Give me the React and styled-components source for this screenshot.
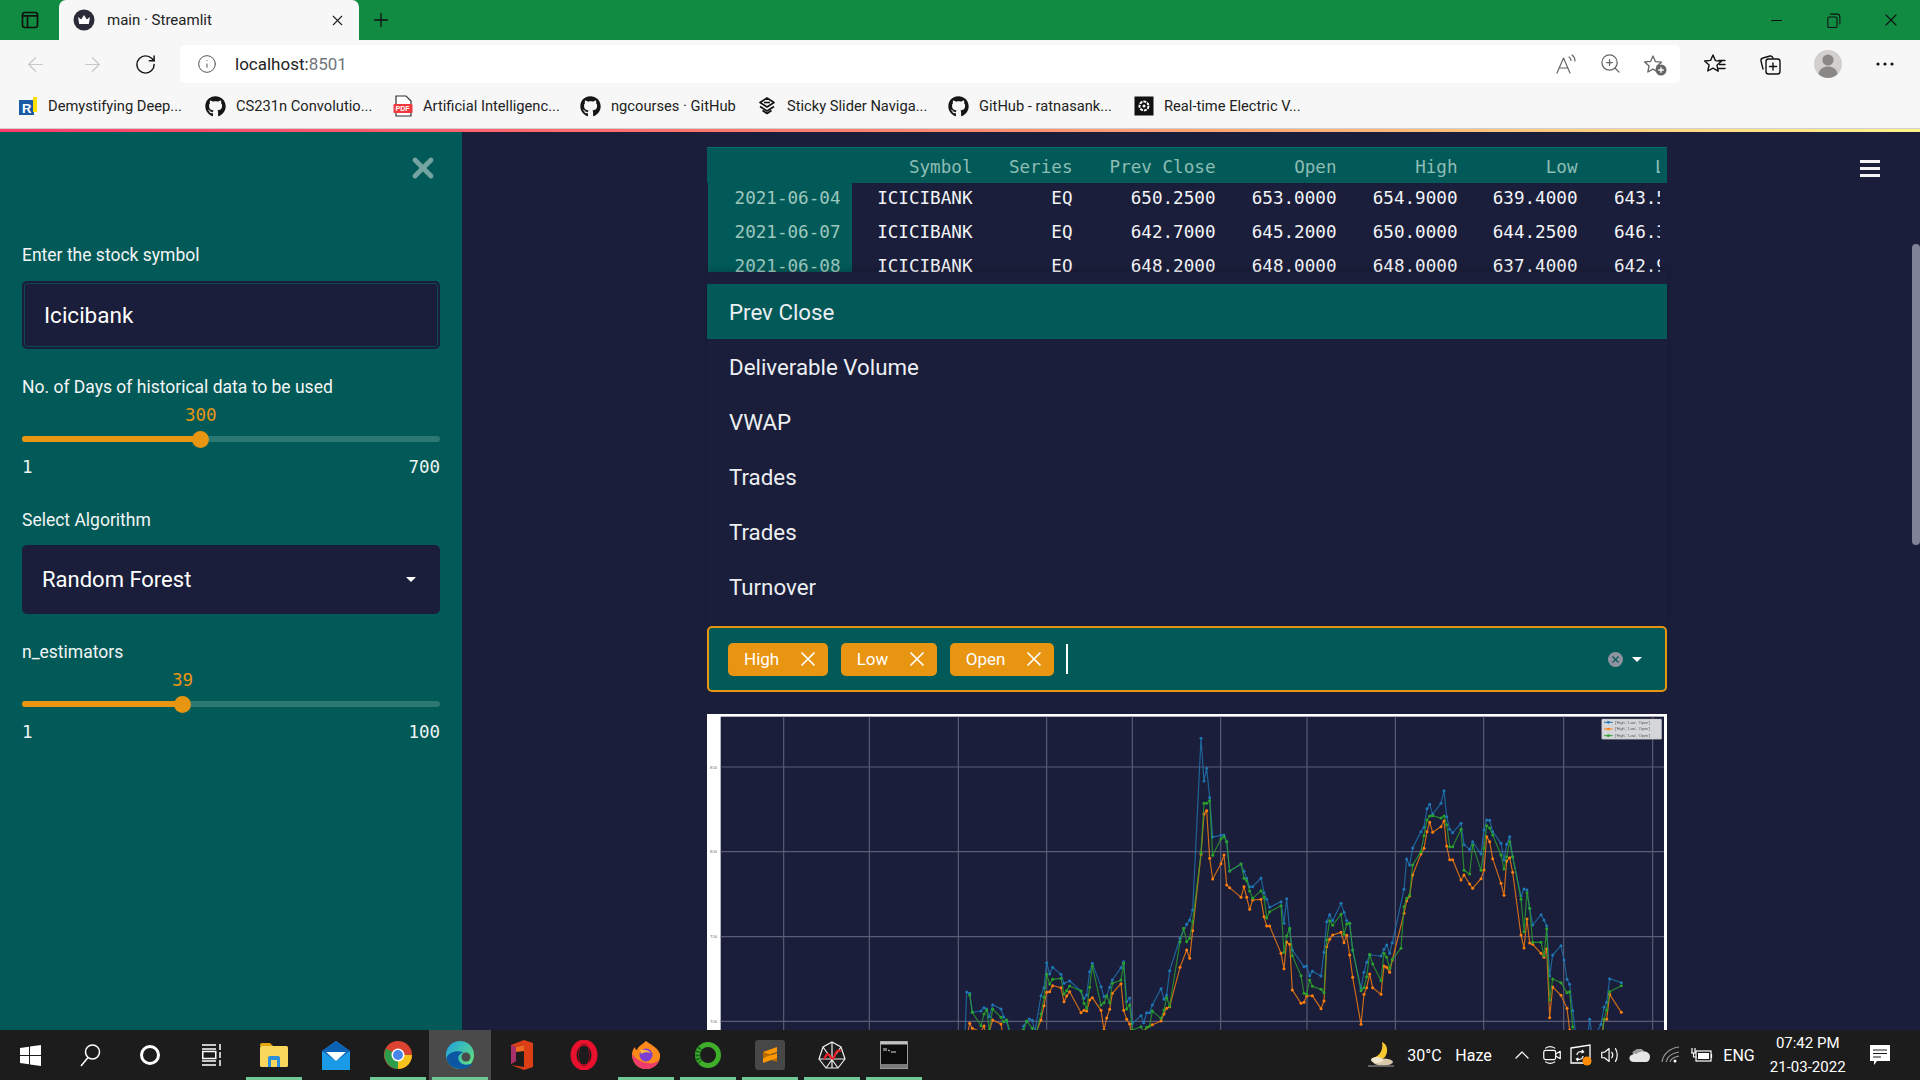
import React from 'react';
import styled, { createGlobalStyle } from 'styled-components';
import { ArrowLeft, ArrowRight, RotateCw, Info, ZoomIn, ChevronUp, X, Plus, Minus } from 'lucide-react';
import { FaGithub } from 'react-icons/fa';

const TEAL = '#025a58';
const NAVY = '#1a1e3a';
const ORANGE = '#e89512';
const UI = '"Roboto", "Liberation Sans", sans-serif';
const APP = '"Roboto", "Noto Sans", sans-serif';
const MONO = '"DejaVu Sans Mono", "Liberation Mono", monospace';

const Global = createGlobalStyle`
  html, body { margin: 0; padding: 0; height: 100%; overflow: hidden; background: ${NAVY}; }
  * { box-sizing: border-box; }
`;

const Screen = styled.div`
  width: 1920px;
  height: 1080px;
  display: flex;
  flex-direction: column;
  overflow: hidden;
  font-family: ${UI};
`;

/* browser chrome */
const TitleBar = styled.div`
  height: 40px;
  flex: none;
  background: #118a42;
  display: flex;
  align-items: center;
`;
const Slot = styled.div`
  width: ${(p) => p.$w}px;
  flex: none;
  display: flex;
  align-items: center;
  justify-content: center;
  color: ${(p) => p.$color || '#111'};
`;
const Tab = styled.div`
  width: 300px;
  height: 40px;
  flex: none;
  background: #f7f7f7;
  border-radius: 7px 7px 0 0;
  display: flex;
  align-items: center;
  padding: 0 13px 0 14px;
  font-size: 15px;
  color: #222;
`;
const TabTitle = styled.span`
  margin-left: 12px;
  flex: 1;
`;
const Grow = styled.div`
  flex: 1;
`;
const Toolbar = styled.div`
  height: 48px;
  flex: none;
  background: #f7f7f7;
  display: flex;
  align-items: center;
  padding-right: 16px;
`;
const Address = styled.div`
  flex: 1;
  height: 38px;
  margin-left: 4px;
  background: #fff;
  border-radius: 5px;
  display: flex;
  align-items: center;
  padding: 0 13px 0 17px;
  gap: 18px;
  font-size: 17px;
  color: #222;
`;
const Port = styled.span`
  color: #70757a;
`;
const AddressIcons = styled.div`
  margin-left: auto;
  display: flex;
  gap: 21px;
  color: #666;
`;
const Bookmarks = styled.div`
  height: 40px;
  flex: none;
  background: #f7f7f7;
  display: flex;
  align-items: center;
  padding: 0 0 4px 18px;
  font-size: 14.7px;
  color: #222;
`;
const Bookmark = styled.div`
  width: ${(p) => p.$w}px;
  flex: none;
  display: flex;
  align-items: center;
  gap: 10px;
  white-space: nowrap;
  overflow: hidden;
`;
const Decoration = styled.div`
  height: 4px;
  flex: none;
  border-top: 1px solid #d0d0d0;
  background: linear-gradient(90deg, #ff3e6c, #ff8a70 50%, #fff38a);
`;

/* streamlit app */
const AppArea = styled.div`
  flex: 1;
  min-height: 0;
  display: flex;
  position: relative;
  background: ${NAVY};
  overflow: hidden;
`;
const Sidebar = styled.aside`
  width: 462px;
  flex: none;
  background: ${TEAL};
  padding: 0 22px;
  color: #f4f6f6;
  font-family: ${APP};
`;
const CloseRow = styled.div`
  height: 111px;
  padding: 20px 1px 0 0;
  display: flex;
  justify-content: flex-end;
  align-items: flex-start;
`;
const Field = styled.div`
  margin-bottom: ${(p) => p.$after}px;
`;
const Label = styled.div`
  height: 24px;
  line-height: 24px;
  font-size: 17.5px;
  color: #f2f5f5;
`;
const TextBox = styled.div`
  margin-top: 14px;
  height: 68px;
  background: ${NAVY};
  border-radius: 5px;
  border: 2px solid ${NAVY};
  box-shadow: inset 0 0 0 1px #0d4a50;
  display: flex;
  align-items: center;
  padding-left: 20px;
  font-size: 22.5px;
  color: #fff;
`;
const SelectBox = styled.div`
  margin-top: 13px;
  height: 69px;
  background: ${NAVY};
  border-radius: 5px;
  display: flex;
  align-items: center;
  justify-content: space-between;
  padding: 0 24px 0 20px;
  font-size: 22px;
  color: #fff;
`;
const Caret = styled.div`
  width: 0;
  height: 0;
  border-left: 5.5px solid transparent;
  border-right: 5.5px solid transparent;
  border-top: 5.5px solid #fff;
`;
const SliderBox = styled.div`
  position: relative;
  height: 80px;
  padding-top: 37px;
  font-family: ${MONO};
  font-size: 17.5px;
`;
const SliderValue = styled.div`
  position: absolute;
  top: 5px;
  transform: translateX(-50%);
  line-height: 22px;
  color: ${ORANGE};
`;
const Track = styled.div`
  position: relative;
  height: 6px;
  border-radius: 3px;
  background: #2c7873;
`;
const TrackFill = styled.div`
  height: 100%;
  border-radius: 3px;
  background: ${ORANGE};
`;
const Thumb = styled.div`
  position: absolute;
  top: -5.5px;
  width: 17px;
  height: 17px;
  margin-left: -8.5px;
  border-radius: 50%;
  background: ${ORANGE};
`;
const Scale = styled.div`
  margin-top: 14px;
  display: flex;
  justify-content: space-between;
  line-height: 22px;
  color: #eef3f3;
`;
const Content = styled.main`
  flex: 1;
  min-width: 0;
  display: flex;
  justify-content: center;
  padding-top: 15px;
`;
const Column = styled.div`
  width: 960px;
  flex: none;
  font-family: ${APP};
`;
const TableFrame = styled.div`
  height: 126px;
  overflow: hidden;
  background: ${NAVY};
  border-top: 1px solid #0b6c6c;
  font-family: ${MONO};
  font-size: 17.6px;
`;
const TableRow = styled.div`
  display: grid;
  grid-template-columns: 145px 132px 100px 143px 121px 121px 120px 71px 1fr;
  height: ${(p) => (p.$head ? 35 : 34)}px;
  line-height: ${(p) => (p.$head ? 39 : 31)}px;
  background: ${(p) => (p.$head ? TEAL : 'transparent')};
  color: ${(p) => (p.$head ? '#8dbdb5' : '#f3f4f7')};
`;
const Cell = styled.div`
  text-align: right;
  padding-right: 11.5px;
  white-space: nowrap;
`;
const IndexCell = styled(Cell)`
  margin-left: 1px;
  background: ${TEAL};
  color: #9cc7be;
`;
const ClipCell = styled.div`
  overflow: hidden;
  white-space: nowrap;
  padding-left: ${(p) => p.$pad}px;
`;
const SelectWrap = styled.div`
  position: relative;
  margin-top: 353px;
`;
const OptionMenu = styled.div`
  position: absolute;
  left: 0;
  right: 0;
  bottom: 100%;
  height: 353px;
  padding: 12px 0 10px;
  background: ${NAVY};
  box-shadow: 0 -2px 6px rgba(0, 0, 0, 0.18);
  margin-bottom: 1px;
`;
const MenuItem = styled.div`
  height: 55px;
  line-height: 57px;
  padding-left: 22px;
  font-size: 22.3px;
  color: #eceef2;
  background: ${(p) => (p.$active ? TEAL : 'transparent')};
`;
const MultiSelect = styled.div`
  height: 66px;
  background: ${TEAL};
  border: 2px solid ${ORANGE};
  border-radius: 5px;
  display: flex;
  align-items: center;
  padding: 0 23px 0 19px;
  color: #fff;
`;
const Tag = styled.div`
  height: 33px;
  display: flex;
  align-items: center;
  gap: 16.5px;
  margin-right: 13px;
  padding: 0 8px 0 16px;
  background: ${ORANGE};
  border-radius: 5px;
  font-size: 17px;
`;
const Cursor = styled.div`
  width: 2px;
  height: 30px;
  background: #fff;
  margin-left: -1px;
`;
const ClearDot = styled.div`
  margin-left: auto;
  width: 15px;
  height: 15px;
  border-radius: 50%;
  background: #8f939f;
  color: ${TEAL};
  display: flex;
  align-items: center;
  justify-content: center;
`;
const SelectCaret = styled(Caret)`
  margin-left: 9px;
`;
const ChartFrame = styled.div`
  margin-top: 22px;
  height: 330px;
  background: #fff;
`;
const ChartSvg = styled.svg`
  display: block;
  width: 960px;
  height: 316px;
  filter: blur(0.45px);
`;
const ScrollGutter = styled.div`
  width: 8px;
  flex: none;
  padding-top: 112px;
`;
const ScrollThumb = styled.div`
  height: 301px;
  border-radius: 4px;
  background: #808396;
`;
const Hamburger = styled.div`
  position: absolute;
  top: 28px;
  right: 40px;
  width: 20px;
  height: 17px;
  border-top: 3px solid #f4f4f6;
  border-bottom: 3px solid #f4f4f6;
  &::after {
    content: '';
    display: block;
    margin-top: 4px;
    height: 3px;
    background: #f4f4f6;
  }
`;

/* taskbar */
const Taskbar = styled.footer`
  height: 50px;
  flex: none;
  background: #1c1c1c;
  display: flex;
  align-items: stretch;
  padding-right: 20px;
  color: #fff;
  font-size: 16px;
`;
const TaskSlot = styled.div`
  position: relative;
  width: ${(p) => p.$w || 62}px;
  margin-right: ${(p) => p.$mr || 0}px;
  flex: none;
  display: flex;
  align-items: center;
  justify-content: center;
  background: ${(p) => (p.$active ? '#4a4a4a' : 'transparent')};
  ${(p) =>
    p.$open &&
    `&::after {
      content: '';
      position: absolute;
      left: 3px;
      right: 3px;
      bottom: 0;
      height: 3px;
      background: #70c897;
    }`}
`;
const Clock = styled.div`
  width: 98px;
  padding-right: 4.6px;
  flex: none;
  display: flex;
  flex-direction: column;
  align-items: center;
  justify-content: center;
  gap: 5px;
  font-size: 15px;
  line-height: 19px;
`;

const StrokeIcon = ({ size = 22, sw = 1.4, color = 'currentColor', children }) => (
  <svg width={size} height={size} viewBox="0 0 24 24" fill="none" stroke={color} strokeWidth={sw} strokeLinecap="round" strokeLinejoin="round">
    {children}
  </svg>
);

const STAR = 'M10 3l2.4 5.6 6 .6-4.5 4 1.3 6-5.2-3.1L4.8 19l1.3-6-4.5-4 6-.6z';

const PanelIcon = () => (
  <StrokeIcon size={20} sw={2}>
    <rect x="3" y="3" width="18" height="18" rx="3" />
    <path d="M3 7h18M9 7v14" />
  </StrokeIcon>
);
const Crown = () => (
  <svg width="22" height="22" viewBox="0 0 22 22">
    <circle cx="11" cy="11" r="10.5" fill="#2b2c3a" />
    <path d="M5 8l3.2 2.4L11 6l2.8 4.4L17 8l-1.2 7H6.2z" fill="#fff" />
  </svg>
);
const ReadAloud = () => (
  <StrokeIcon size={24} sw={1.2}>
    <path d="M3 21L9.5 6 16 21M5.3 16h8.4M15 5c1.5 1 2 2.5 2 3.5M18 3c2 1.4 3 3.6 3 6" />
  </StrokeIcon>
);
const StarAdd = () => (
  <svg width="24" height="24" viewBox="0 0 24 24" fill="none">
    <path d={STAR} stroke="#666" strokeWidth="1.3" strokeLinejoin="round" transform="translate(0 1)" />
    <circle cx="18" cy="18" r="5.5" fill="#666" />
    <path d="M18 15.2v5.6M15.2 18h5.6" stroke="#fff" strokeWidth="1.4" />
  </svg>
);
const Favorites = () => (
  <StrokeIcon size={24} sw={1.4} color="#111">
    <path d={STAR} />
    <path d="M16 8.5h6M16.5 12.5h5.5M15 16.5h7" />
  </StrokeIcon>
);
const Collections = () => (
  <StrokeIcon size={24} sw={1.4} color="#111">
    <rect x="8" y="7" width="14" height="15" rx="2.5" />
    <path d="M15 11v7M11.5 14.5h7M5 17l-2-8c-.3-1.5.4-2.6 2-3l7-2c1.4-.3 2.4.2 3 2" />
  </StrokeIcon>
);
const Profile = () => (
  <svg width="28" height="28" viewBox="0 0 28 28">
    <circle cx="14" cy="14" r="14" fill="#d2d0ce" />
    <circle cx="14" cy="10" r="5.6" fill="#8a8886" />
    <path d="M4.5 24c1-5.5 5-7.5 9.5-7.5s8.5 2 9.500 7.500c-2.500 2.500-6 4-9.500 4s-7-1.500-9.500-4z" fill="#8a8886" />
  </svg>
);
const Dots = () => (
  <svg width="20" height="6" viewBox="0 0 20 6">
    <circle cx="3" cy="3" r="1.6" fill="#111" />
    <circle cx="10" cy="3" r="1.6" fill="#111" />
    <circle cx="17" cy="3" r="1.6" fill="#111" />
  </svg>
);
const Restore = () => (
  <StrokeIcon size={17} sw={1.5} color="#111">
    <rect x="4" y="7" width="13" height="15" rx="2" />
    <path d="M8 3h9c2.5 0 4 1.500 4 4v10" />
  </StrokeIcon>
);

const ResearchIcon = () => (
  <svg width="20" height="20" viewBox="0 0 20 20">
    <rect x="1" y="4" width="15" height="15" fill="#1b5ba6" />
    <rect x="15" y="1" width="4" height="15" fill="#ffe100" />
    <text x="4" y="16.5" fontSize="13" fontWeight="700" fontFamily="Liberation Sans" fill="#fff">R</text>
  </svg>
);
const PdfIcon = () => (
  <svg width="20" height="22" viewBox="0 0 20 22">
    <path d="M3 1h10l5 5v15H3z" fill="#fff" stroke="#333" strokeWidth="1.2" />
    <rect x="0.5" y="9" width="19" height="9" rx="1" fill="#f0393e" />
    <text x="2.5" y="16" fontSize="7" fontWeight="700" fontFamily="Liberation Sans" fill="#fff">PDF</text>
  </svg>
);
const StickyIcon = () => (
  <svg width="20" height="20" viewBox="0 0 20 20" fill="none" stroke="#111" strokeWidth="1.6" strokeLinejoin="round">
    <path d="M10 2l7 4.500-7 4.500-7-4.500z" />
    <path d="M7 6.500h6" />
    <path d="M3 10.500l7 4.500 7-4.500M5.500 14.500l4.500 3 4.500-3" />
  </svg>
);
const GearTile = () => (
  <svg width="20" height="20" viewBox="0 0 20 20">
    <rect x="0.5" y="0.5" width="19" height="19" fill="#111" />
    <circle cx="10" cy="10" r="4.5" fill="none" stroke="#fff" strokeWidth="2" strokeDasharray="3 1" />
    <circle cx="10" cy="10" r="1.5" fill="#fff" />
  </svg>
);
const Git = () => <FaGithub size={21} color="#171515" />;

const Win = () => (
  <svg width="21" height="21" viewBox="0 0 21 21" fill="#fff">
    <path d="M0 3l9-1.300v8.300H0zM10 1.500L21 0v10H10zM0 11h9v8.300L0 18zM10 11h11v10l-11-1.500z" />
  </svg>
);
const SearchGlyph = () => (
  <svg width="24" height="24" viewBox="0 0 24 24" fill="none" stroke="#fff" strokeWidth="1.5">
    <circle cx="14.5" cy="9" r="7" />
    <path d="M10 14.500L3 23" />
  </svg>
);
const Ring = () => (
  <svg width="22" height="22" viewBox="0 0 22 22" fill="none" stroke="#fff" strokeWidth="3">
    <circle cx="11" cy="11" r="8.5" />
  </svg>
);
const TaskView = () => (
  <svg width="20" height="24" viewBox="0 0 20 24" fill="none" stroke="#fff" strokeWidth="1.5">
    <path d="M0 2h14M0 6h14M0 22h14M0 18h14" />
    <rect x="0.75" y="8.5" width="13" height="7" />
    <path d="M18 1v6M18 9v6M18 17v6" />
  </svg>
);
const Explorer = () => (
  <svg width="28" height="24" viewBox="0 0 28 24">
    <path d="M0 2c0-1 .6-2 2-2h8l3 3h-13z" fill="#e5a50a" />
    <rect y="3" width="28" height="21" rx="1.5" fill="#f9d65c" />
    <path d="M8 24v-9c0-1 .5-2 2-2h8c1.500 0 2 1 2 2v9h-3v-7h-6v7z" fill="#2b8fd9" />
  </svg>
);
const Mail = () => (
  <svg width="30" height="30" viewBox="0 0 30 30">
    <path d="M1 11L15 1l14 10v19H1z" fill="#1a9be8" />
    <path d="M1 11L15 1l14 10-14 10z" fill="#0d62b5" />
    <path d="M5 12h20L15 21z" fill="#fff" />
  </svg>
);
const Chrome = () => (
  <svg width="28" height="28" viewBox="0 0 28 28">
    <circle cx="14" cy="14" r="14" fill="#d9432f" />
    <path d="M14 14L2 7.500A14 14 0 0 0 14 28z" fill="#2d9d4c" />
    <path d="M14 14h14a14 14 0 0 1-14 14z" fill="#f6c21c" />
    <circle cx="14" cy="14" r="6.5" fill="#fff" />
    <circle cx="14" cy="14" r="5" fill="#4a86e8" />
  </svg>
);
const Edge = () => (
  <svg width="30" height="30" viewBox="0 0 30 30">
    <defs>
      <linearGradient id="edgeTop" x1="0" y1="0" x2="1" y2="0.8">
        <stop offset="0" stopColor="#1c9fe6" />
        <stop offset="1" stopColor="#63e07a" />
      </linearGradient>
    </defs>
    <circle cx="15" cy="15" r="14" fill="url(#edgeTop)" />
    <path d="M1.500 18c1 7 8 11 14 11 5 0 10-2 12-6-4 2.500-10 2.500-13-1.500-2.500-3.500-1-8 4-9-7-3-15 0-17 5.500z" fill="#0b57a4" />
    <circle cx="21" cy="17" r="4.500" fill="#4a4a4a" />
  </svg>
);
const Office = () => (
  <svg width="24" height="30" viewBox="0 0 24 30">
    <path d="M1 5l13-5 9 3v24l-9 3-13-5 13 2V5L6 7v14l-5 3z" fill="#dc3e15" />
    <path d="M6 7l8-2v6l-8 1z" fill="#f06a24" />
    <path d="M1 5l5 2v14l-5 3z" fill="#a62f6c" />
  </svg>
);
const Opera = () => (
  <svg width="28" height="30" viewBox="0 0 28 30" fill="none">
    <ellipse cx="14" cy="15" rx="10.5" ry="12.5" stroke="#e8112d" strokeWidth="6" />
    <ellipse cx="14" cy="15" rx="5.5" ry="11" stroke="#8f0a1c" strokeWidth="1" />
  </svg>
);
const Firefox = () => (
  <svg width="30" height="30" viewBox="0 0 30 30">
    <path d="M15 1c3 3 11 5 14 13 1 8-5 15-14 15S1 22 1 14c0-3 2-6 3-7 0 2 1 3 2 3 1-4 5-5 9-9z" fill="#ff8a1c" />
    <path d="M1 14c0 8 6 15 14 15 6 0 11-3 13-9-3 3-8 4-12 3C9 22 5 19 1 14z" fill="#ef3a6d" />
    <circle cx="15" cy="15" r="6.5" fill="#7b3fd1" />
    <path d="M9 10c4-1 9 0 11 3-3-1-7-1-10 1z" fill="#ffbb3d" />
  </svg>
);
const GreenRing = () => (
  <svg width="28" height="28" viewBox="0 0 28 28" fill="none">
    <circle cx="14" cy="14" r="10.5" stroke="#3fae2a" strokeWidth="5" />
    <path d="M6.500 7A10.500 10.500 0 0 0 6.500 21" stroke="#1a6d1e" strokeWidth="5" strokeDasharray="2 1.500" />
  </svg>
);
const Sublime = () => (
  <svg width="30" height="30" viewBox="0 0 30 30">
    <rect width="30" height="30" rx="3" fill="#474747" />
    <path d="M8 12l14-5v5L8 17z" fill="#ff9800" />
    <path d="M8 12l14 5v5L8 17z" fill="#b86a00" />
    <path d="M8 18l14-5v5L8 23z" fill="#ff9800" />
  </svg>
);
const Web = () => (
  <svg width="30" height="30" viewBox="0 0 30 30" fill="none" stroke="#eee" strokeWidth="1.2">
    <path d="M15 2l9 5 4 12-7 9H9l-7-9 4-12zM15 2v26M2 19l26 0M6 7l15 21M24 7L9 28" />
    <path d="M7 19c2-4 4-7 6-3s4 3 5-1 3-5 6-4" stroke="#e81d25" strokeWidth="2.2" />
  </svg>
);
const Terminal = () => (
  <svg width="28" height="28" viewBox="0 0 28 28">
    <rect x="0.5" y="0.5" width="27" height="27" fill="#0c0c0c" stroke="#9a9a9a" />
    <rect x="0.5" y="0.5" width="27" height="3" fill="#c0c0c0" />
    <rect x="0.5" y="23" width="27" height="4" fill="#7a7a7a" />
    <path d="M4 7v3M6 7v3M8 9l2 1M11 11h5" stroke="#ddd" strokeWidth="1" />
  </svg>
);
const Moon = () => (
  <svg width="30" height="28" viewBox="0 0 30 28">
    <path d="M15 1c5 2 7 9 3 15-3 3-10 4-14 1 7 0 13-7 11-16z" fill="#f7c92e" />
    <ellipse cx="16" cy="21" rx="10" ry="3.5" fill="#d8c9a8" />
    <ellipse cx="10" cy="19" rx="6" ry="3" fill="#efe6d0" />
    <path d="M1 25h26" stroke="#777" strokeWidth="1.5" />
  </svg>
);
const Meet = () => (
  <StrokeIcon size={22} sw={1.3} color="#fff">
    <rect x="3" y="7" width="13" height="10" rx="2" />
    <path d="M16 11l5-3v8l-5-3M5 4.500c3-2 7-2 10 0M5 19.500c3 2 7 2 10 0" />
  </StrokeIcon>
);
const Sync = () => (
  <svg width="24" height="24" viewBox="0 0 24 24" fill="none" stroke="#fff" strokeWidth="1.3">
    <path d="M1 5l19-3v18H1z" />
    <path d="M7 12c0-3 3-4 6-3M13 13c0 3-3 4-6 3M12 7l1.500 2-2 1M8 18l-1.500-2 2-1" />
    <circle cx="17" cy="18" r="4.5" fill="#ff8c00" stroke="none" />
  </svg>
);
const Speaker = () => (
  <StrokeIcon size={22} sw={1.3} color="#fff">
    <path d="M3 9v6h3l5 4V5L6 9zM14 9c1 1.500 1 4.500 0 6M18 5c2.500 4 2.500 10 0 14" />
  </StrokeIcon>
);
const Cloud = () => (
  <svg width="22" height="16" viewBox="0 0 22 16">
    <path d="M5 15c-6 0-6-7-1-7.500C5 2 12 0 15 4.500c4 0 6 2.500 6 5.500s-2 5-4 5z" fill="#e6e6e6" />
    <path d="M3 6C5 2 12 0 15 4.500 11 4 8 6 7.500 7 6 6.500 4.500 6.500 3 6z" fill="#9a9a9a" />
  </svg>
);
const WifiBars = () => (
  <svg width="20" height="20" viewBox="0 0 20 20" fill="none" stroke="#9a9a9a" strokeWidth="1.2">
    <path d="M1 17C2 9 9 3 18 2M5 17c1-5 6-9 13-10M9 17c.5-3 4-5 9-6" />
    <circle cx="14" cy="16" r="1.5" fill="#fff" stroke="none" />
  </svg>
);
const Battery = () => (
  <svg width="22" height="20" viewBox="0 0 22 20" fill="none" stroke="#fff" strokeWidth="1.2">
    <rect x="5" y="6" width="15" height="10" fill="#1c1c1c" />
    <rect x="7" y="8" width="11" height="6" fill="#fff" stroke="none" />
    <path d="M20.500 9v4M1 3v5M4 3v5M0 8h5M2.500 8v4h3" />
  </svg>
);
const Notify = () => (
  <svg width="22" height="22" viewBox="0 0 22 22">
    <path d="M1 1h20v16H8l-3 4v-4H1z" fill="#fff" />
    <path d="M4 6h14M4 9.500h14M4 13h8" stroke="#1c1c1c" strokeWidth="1.2" />
  </svg>
);

const BOOKMARKS = [
  { icon: <ResearchIcon />, text: 'Demystifying Deep...', w: 187 },
  { icon: <Git />, text: 'CS231n Convolutio...', w: 188 },
  { icon: <PdfIcon />, text: 'Artificial Intelligenc...', w: 187 },
  { icon: <Git />, text: 'ngcourses · GitHub', w: 177 },
  { icon: <StickyIcon />, text: 'Sticky Slider Naviga...', w: 191 },
  { icon: <Git />, text: 'GitHub - ratnasank...', w: 186 },
  { icon: <GearTile />, text: 'Real-time Electric V...', w: 170 },
];

const ROWS = [
  ['2021-06-04', 'EQ', '650.2500', '653.0000', '654.9000', '639.4000', '643.5000'],
  ['2021-06-07', 'EQ', '642.7000', '645.2000', '650.0000', '644.2500', '646.3000'],
  ['2021-06-08', 'EQ', '648.2000', '648.0000', '648.0000', '637.4000', '642.9000'],
];

const OPTIONS = ['Prev Close', 'Deliverable Volume', 'VWAP', 'Trades', 'Trades', 'Turnover'];

/* chart points are read off the picture in 3x units, second half starts 1440 to the right */
const pts = (left, right) => {
  const out = [];
  for (let i = 0; i < left.length; i += 2) out.push(`${left[i]},${left[i + 1]}`);
  for (let i = 0; i < right.length; i += 2) out.push(`${right[i] + 1440},${right[i + 1]}`);
  return out;
};

const HIGH = pts(
  [795,975,800,846,809,850,817,907,843,903,852,893,860,897,868,920,878,884,903,897,911,920,920,935,930,975,960,985,971,948,980,935,988,927,997,931,1005,965,1023,857,1032,833,1040,758,1049,792,1058,772,1083,793,1092,820,1109,813,1143,843,1152,865,1160,855,1169,785,1177,760,1203,830,1212,860,1220,857,1229,832,1237,810,1263,773,1271,755,1280,875,1289,864,1297,940,1323,917,1331,938,1340,908,1349,908,1357,885,1383,836,1392,868,1400,855,1409,782],
  [0,685,20,643,29,630,38,600,63,85,72,213,80,175,89,263,98,381,123,376,132,375,140,395,149,483,183,462,192,484,200,505,209,530,218,530,243,504,252,548,260,568,269,592,303,575,312,640,320,566,329,660,337,720,372,770,380,768,389,797,397,784,423,798,432,727,440,635,449,614,458,632,483,580,492,607,500,632,509,640,518,720,543,835,552,787,560,757,569,735,603,738,612,718,620,705,629,730,637,698,672,538,680,447,689,465,698,414,723,365,732,352,741,296,749,283,758,313,783,280,792,242,800,320,809,358,818,368,843,340,852,404,869,418,878,395,903,432,912,360,920,330,929,331,938,365,963,400,972,450,980,403,989,380,998,440,1023,558,1032,537,1041,540,1049,595,1058,645,1083,614,1092,630,1100,648,1109,798,1118,735,1143,707,1152,750,1161,808,1169,823,1178,902,1187,970,1220,1000,1229,928,1238,990,1263,943,1272,892,1280,877,1289,806,1324,818]
);
const LOW = pts(
  [800,985,809,940,817,955,843,965,852,948,860,990,878,930,903,942,911,985,1005,975,1023,930,1032,887,1040,847,1049,845,1058,827,1083,833,1092,875,1100,858,1109,845,1143,908,1152,901,1160,903,1169,870,1177,863,1203,901,1212,960,1220,924,1229,898,1237,850,1263,821,1271,901,1280,928,1289,942,1297,985,1357,944,1383,933,1392,912,1400,895,1409,890],
  [0,772,20,720,29,745,38,662,63,433,72,312,80,302,89,445,98,507,123,461,132,435,140,525,149,533,183,562,192,530,200,562,209,598,218,570,243,568,252,620,260,648,269,648,303,730,312,776,320,696,329,703,337,840,363,880,372,877,380,858,397,857,423,896,432,873,440,710,449,688,458,675,483,667,492,698,500,676,509,735,518,802,543,943,552,853,560,833,569,792,578,833,603,853,612,768,620,772,629,787,637,750,672,610,680,572,689,558,698,495,723,432,732,415,741,365,749,337,758,367,783,350,792,333,800,408,809,449,818,449,843,510,852,495,869,522,878,535,903,506,912,480,920,380,929,395,938,446,963,520,972,556,980,453,989,443,998,487,1023,675,1032,714,1041,627,1049,699,1058,703,1083,730,1092,742,1100,716,1109,923,1118,831,1143,856,1161,895,1169,960,1180,1040,1220,1050,1238,990,1263,1000,1272,928,1280,928,1289,853,1324,907]
);
const OPEN = pts(
  [809,855,817,907,843,947,852,912,860,900,868,960,878,897,903,922,911,935,920,930,930,965,971,960,980,933,997,955,1005,985,1023,912,1032,862,1040,793,1049,822,1058,808,1083,805,1092,852,1100,842,1109,828,1143,843,1152,880,1160,895,1169,832,1177,768,1203,885,1212,878,1220,858,1229,878,1237,820,1263,810,1271,760,1280,897,1289,885,1297,960,1323,950,1331,965,1340,952,1349,948,1357,903,1383,925,1392,900,1400,863,1409,888],
  [0,695,11,655,20,695,29,685,38,635,63,428,72,280,80,280,89,272,98,436,123,386,132,380,140,395,149,483,183,462,192,505,200,512,209,543,218,565,243,542,252,562,260,624,269,605,303,587,312,727,320,678,329,655,337,737,363,797,372,850,380,853,389,810,397,829,423,838,432,848,440,690,449,632,458,646,483,613,492,673,500,642,509,640,518,720,543,842,552,833,560,800,569,733,578,762,603,812,612,730,620,742,629,775,637,748,663,715,672,590,680,565,689,555,698,465,723,425,732,377,741,330,749,318,758,317,783,324,792,318,800,344,809,410,818,410,843,358,852,481,869,492,878,405,903,481,912,415,920,347,929,354,938,375,963,435,972,477,980,440,989,395,998,440,1023,568,1032,665,1041,548,1049,595,1058,697,1083,697,1092,737,1100,656,1109,870,1118,807,1143,818,1161,848,1169,845,1178,950,1187,1040,1263,1030,1272,928,1280,900,1289,845,1324,827]
);

const SERIES = [
  { points: HIGH, color: '#1f77b4' },
  { points: LOW, color: '#ff7f0e' },
  { points: OPEN, color: '#2ca02c' },
];
const GRID_X = [251, 508, 775, 1040, 1297, 1562, 1821, 2086, 2351, 2591, 2858];
const GRID_Y = [[171, '850'], [425, '800'], [680, '750'], [934, '700']];

const Chart = () => (
  <ChartFrame>
    <ChartSvg viewBox="21 12 2880 948">
      <rect x="62" y="20" width="2830" height="960" fill={NAVY} />
      {GRID_X.map((x) => (
        <line key={x} x1={x} x2={x} y1="20" y2="980" stroke="#5a5d74" strokeWidth="3.5" />
      ))}
      {GRID_Y.map(([y, label]) => (
        <g key={label}>
          <line x1="62" x2="2892" y1={y} y2={y} stroke="#5a5d74" strokeWidth="3.5" />
          <text x="30" y={y + 5} fontSize="13" fontFamily="Liberation Sans" fill="#777">{label}</text>
        </g>
      ))}
      {SERIES.map((s) => (
        <g key={s.color}>
          <polyline points={s.points.join(' ')} fill="none" stroke={s.color} strokeWidth="3.5" opacity="0.8" />
          {s.points.map((p) => {
            const [cx, cy] = p.split(',');
            return <circle key={p} cx={cx} cy={cy} r="4.5" fill={s.color} />;
          })}
        </g>
      ))}
      <rect x="2705" y="27" width="180" height="61" rx="3" fill="#d5d6da" stroke="#aaa" />
      {SERIES.map((s, i) => (
        <g key={s.color}>
          <line x1="2712" x2="2738" y1={37 + i * 20} y2={37 + i * 20} stroke={s.color} strokeWidth="3" />
          <circle cx="2725" cy={37 + i * 20} r="4" fill={s.color} />
          <text x="2745" y={41 + i * 20} fontSize="11.5" fontFamily="Liberation Sans" fill="#555">['High', 'Low', 'Open']</text>
        </g>
      ))}
    </ChartSvg>
  </ChartFrame>
);

const Slider = ({ value, min, max }) => {
  const pct = ((value - min) / (max - min)) * 100;
  return (
    <SliderBox>
      <SliderValue style={{ left: `${pct}%` }}>{value}</SliderValue>
      <Track>
        <TrackFill style={{ width: `${pct}%` }} />
        <Thumb style={{ left: `${pct}%` }} />
      </Track>
      <Scale>
        <span>{min}</span>
        <span>{max}</span>
      </Scale>
    </SliderBox>
  );
};

const TASK_APPS = [
  { el: <Explorer />, open: true },
  { el: <Mail /> },
  { el: <Chrome />, open: true },
  { el: <Edge />, open: true, active: true },
  { el: <Office /> },
  { el: <Opera /> },
  { el: <Firefox />, open: true },
  { el: <GreenRing />, open: true },
  { el: <Sublime />, open: true },
  { el: <Web />, open: true },
  { el: <Terminal />, open: true },
];

export default function App() {
  return (
    <Screen>
      <Global />
      <TitleBar>
        <Slot $w={59}><PanelIcon /></Slot>
        <Tab>
          <Crown />
          <TabTitle>main · Streamlit</TabTitle>
          <X size={17} strokeWidth={1.6} />
        </Tab>
        <Slot $w={43}><Plus size={22} strokeWidth={1.4} /></Slot>
        <Grow />
        <Slot $w={57}><Minus size={17} strokeWidth={1.4} /></Slot>
        <Slot $w={57}><Restore /></Slot>
        <Slot $w={58}><X size={20} strokeWidth={1.3} /></Slot>
      </TitleBar>
      <Toolbar>
        <Slot $w={70} $color="#c9c9c9"><ArrowLeft size={23} strokeWidth={1.3} /></Slot>
        <Slot $w={44} $color="#c9c9c9"><ArrowRight size={23} strokeWidth={1.3} /></Slot>
        <Slot $w={62}><RotateCw size={23} strokeWidth={1.5} /></Slot>
        <Address>
          <Info size={20} strokeWidth={1.2} color="#555" />
          <span>localhost:<Port>8501</Port></span>
          <AddressIcons>
            <ReadAloud />
            <ZoomIn size={23} strokeWidth={1.3} />
            <StarAdd />
          </AddressIcons>
        </Address>
        <Slot $w={70}><Favorites /></Slot>
        <Slot $w={40}><Collections /></Slot>
        <Slot $w={76}><Profile /></Slot>
        <Slot $w={38}><Dots /></Slot>
      </Toolbar>
      <Bookmarks>
        {BOOKMARKS.map((b) => (
          <Bookmark key={b.text} $w={b.w}>
            {b.icon}
            <span>{b.text}</span>
          </Bookmark>
        ))}
      </Bookmarks>
      <Decoration />
      <AppArea>
        <Sidebar>
          <CloseRow>
            <X size={32} strokeWidth={3.6} color="#74a5a1" />
          </CloseRow>
          <Field $after={26}>
            <Label>Enter the stock symbol</Label>
            <TextBox>Icicibank</TextBox>
          </Field>
          <Field $after={29}>
            <Label>No. of Days of historical data to be used</Label>
            <Slider value={300} min={1} max={700} />
          </Field>
          <Field $after={26}>
            <Label>Select Algorithm</Label>
            <SelectBox>
              Random Forest
              <Caret />
            </SelectBox>
          </Field>
          <Field $after={0}>
            <Label>n_estimators</Label>
            <Slider value={39} min={1} max={100} />
          </Field>
        </Sidebar>
        <Content>
          <Column>
            <TableFrame>
              <TableRow $head>
                <Cell />
                <Cell>Symbol</Cell>
                <Cell>Series</Cell>
                <Cell>Prev Close</Cell>
                <Cell>Open</Cell>
                <Cell>High</Cell>
                <Cell>Low</Cell>
                <ClipCell $pad={66}>Last</ClipCell>
              </TableRow>
              {ROWS.map((r) => (
                <TableRow key={r[0]}>
                  <IndexCell>{r[0]}</IndexCell>
                  <Cell>ICICIBANK</Cell>
                  <Cell>{r[1]}</Cell>
                  <Cell>{r[2]}</Cell>
                  <Cell>{r[3]}</Cell>
                  <Cell>{r[4]}</Cell>
                  <Cell>{r[5]}</Cell>
                  <ClipCell $pad={25}>{r[6]}</ClipCell>
                </TableRow>
              ))}
            </TableFrame>
            <SelectWrap>
              <OptionMenu>
                {OPTIONS.map((o, i) => (
                  <MenuItem key={i} $active={i === 0}>{o}</MenuItem>
                ))}
              </OptionMenu>
              <MultiSelect>
                {['High', 'Low', 'Open'].map((t) => (
                  <Tag key={t}>
                    {t}
                    <X size={24} strokeWidth={1.7} />
                  </Tag>
                ))}
                <Cursor />
                <ClearDot><X size={11} strokeWidth={2.5} /></ClearDot>
                <SelectCaret />
              </MultiSelect>
            </SelectWrap>
            <Chart />
          </Column>
        </Content>
        <ScrollGutter><ScrollThumb /></ScrollGutter>
        <Hamburger />
      </AppArea>
      <Taskbar>
        <TaskSlot $w={60}><Win /></TaskSlot>
        <TaskSlot $w={60}><SearchGlyph /></TaskSlot>
        <TaskSlot $w={60}><Ring /></TaskSlot>
        <TaskSlot $w={63}><TaskView /></TaskSlot>
        {TASK_APPS.map((a, i) => (
          <TaskSlot key={i} $open={a.open} $active={a.active}>{a.el}</TaskSlot>
        ))}
        <Grow />
        <TaskSlot $w={38}><Moon /></TaskSlot>
        <TaskSlot $w={48}>30°C</TaskSlot>
        <TaskSlot $w={50} $mr={8.5}>Haze</TaskSlot>
        <TaskSlot $w={29}><ChevronUp size={24} strokeWidth={1.2} /></TaskSlot>
        <TaskSlot $w={31}><Meet /></TaskSlot>
        <TaskSlot $w={29}><Sync /></TaskSlot>
        <TaskSlot $w={28}><Speaker /></TaskSlot>
        <TaskSlot $w={31}><Cloud /></TaskSlot>
        <TaskSlot $w={32}><WifiBars /></TaskSlot>
        <TaskSlot $w={30}><Battery /></TaskSlot>
        <TaskSlot $w={44}>ENG</TaskSlot>
        <Clock>
          <span>07:42 PM</span>
          <span>21-03-2022</span>
        </Clock>
        <TaskSlot $w={41}><Notify /></TaskSlot>
      </Taskbar>
    </Screen>
  );
}
